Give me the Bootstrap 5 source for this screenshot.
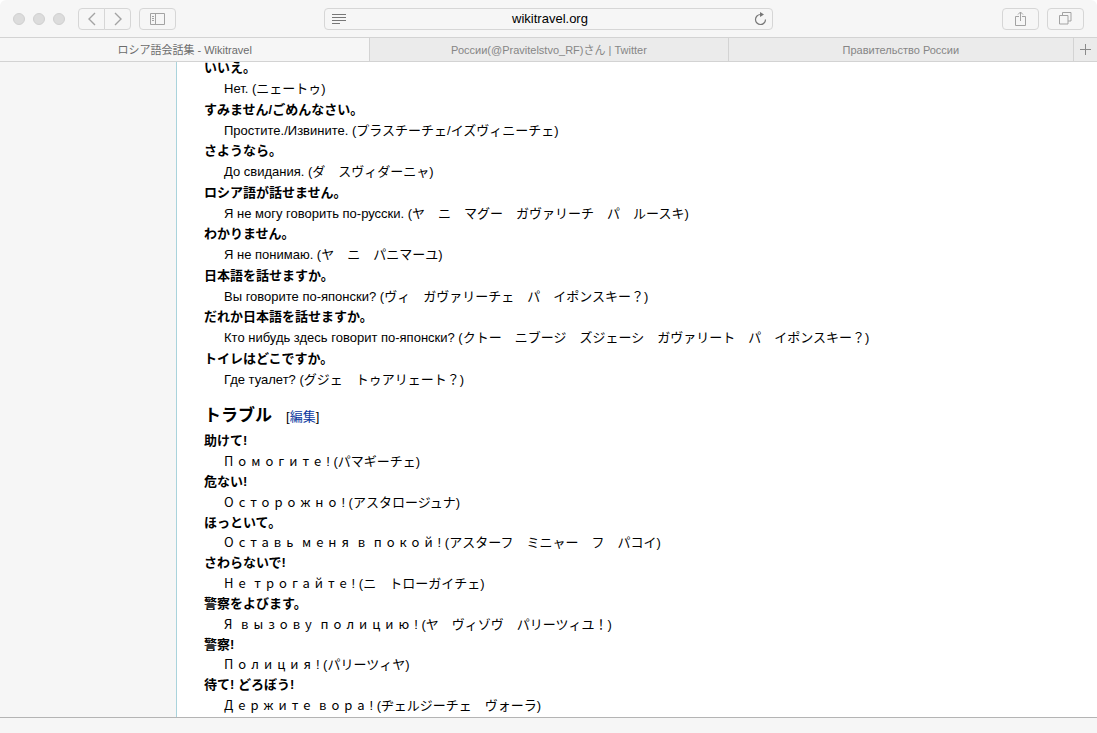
<!DOCTYPE html>
<html lang="ja">
<head>
<meta charset="utf-8">
<meta name="viewport" content="width=device-width, initial-scale=1">
<title>ロシア語会話集 - Wikitravel</title>
<link href="https://cdn.jsdelivr.net/npm/bootstrap@5.3.0/dist/css/bootstrap.min.css" rel="stylesheet">
<style>
body { font-family: "Liberation Sans", "Noto Sans CJK JP", sans-serif; font-size: 13px; line-height: 20px; color: #000; background: #fff; }
.browser { background: #f6f6f6; border-radius: 6px 6px 0 0; overflow: hidden; }
.toolbar { height: 38px; border-bottom: 1px solid #d3d3d3; padding: 0 13px; }
.toolbar-side { flex: 1 1 0; }
.lights { margin-right: 13px; }
.light { width: 12px; height: 12px; border-radius: 50%; background: #dcdcdc; border: 1px solid #d0d0d0; }
.tool { height: 22px; width: 37px; padding: 0; line-height: 1; border: 1px solid #d6d6d6; border-radius: 4px; background: #f6f6f6; color: #a3a3a3; display: flex; align-items: center; justify-content: center; }
.tool-nav { width: 27px; }
.tool-nav + .tool-nav { margin-left: -1px; }
.address { width: 42%; height: 22px; border: 1px solid #d6d6d6; border-radius: 4px; padding: 0 5px 0 7px; color: #777; }
.address input { background: transparent; border: 0; outline: 0; min-width: 0; font-size: 13px; line-height: 20px; color: #000; padding: 0; }
.plain { border: 0; background: none; padding: 0; line-height: 1; color: inherit; display: flex; }
.tabs { height: 24px; border-bottom: 1px solid #d3d3d3; font-size: 11px; line-height: 24px; }
.tab { flex: 345 1 0; background: #ebebeb; color: #868686; text-decoration: none; border-right: 1px solid #d3d3d3; }
.tab-wide { flex-grow: 358; }
.tab-current { flex-grow: 370; background: #f6f6f6; color: #6c6c6c; }
.tab-new { width: 23px; background: #ebebeb; color: #8a8a8a; }
.sidebar { width: 176px; background: #f6f6f6; }
.article { background: #fff; border-left: 1px solid #aad3dc; padding-left: 27px; min-height: 0; overflow: hidden; }
.phrases { margin: 0; }
.phrases dt { line-height: 20px; font-weight: 700; }
.phrases dd { line-height: 20px; margin: 0 0 0 20px; padding-top: 1px; }
.phrases-basic { margin-top: -4px; }
.phrases-basic dd:nth-of-type(odd) { margin-bottom: 1px; }
.phrases-trouble dd:nth-of-type(3n) { padding-top: 0; }
.section-title { font-size: 17px; line-height: 24px; font-weight: 700; margin: 14px 0 2px; }
.edit { font-size: 13px; font-weight: 400; margin-left: 14px; }
.edit a { color: #0b3aa0; text-decoration: none; }
.wide { font-family: "Noto Sans CJK JP", sans-serif; letter-spacing: 5px; line-height: 1; }
.status { height: 16px; border-top: 1px solid #b4b4b4; }
</style>
</head>
<body>
<div class="browser d-flex flex-column vh-100">
  <header class="toolbar d-flex align-items-center flex-shrink-0">
    <div class="toolbar-side d-flex align-items-center">
      <div class="lights d-flex gap-2">
        <span class="light"></span><span class="light"></span><span class="light"></span>
      </div>
      <button class="tool tool-nav rounded-end-0" type="button" aria-label="戻る"><svg width="10" height="14" fill="none" stroke="currentColor" stroke-width="1.4"><path d="M8 1 2 7l6 6"/></svg></button>
      <button class="tool tool-nav rounded-start-0 me-2" type="button" aria-label="進む"><svg width="10" height="14" fill="none" stroke="currentColor" stroke-width="1.4"><path d="m2 1 6 6-6 6"/></svg></button>
      <button class="tool" type="button" aria-label="サイドバー"><svg width="15" height="12" fill="none" stroke="currentColor"><path d="M.5.5h14v11H.5zM5.500.5v11M2 3.500h2M2 5.500h2M2 7.500h2"/></svg></button>
    </div>
    <div class="address d-flex align-items-center">
      <button class="plain" type="button" aria-label="リーダー"><svg width="14" height="10" stroke="currentColor"><path d="M0 .5h14M0 3.500h14M0 6.500h14M0 9.500h8"/></svg></button>
      <input class="flex-fill text-center" type="text" value="wikitravel.org" aria-label="アドレス">
      <button class="plain" type="button" aria-label="再読み込み"><svg width="13" height="14" fill="none" stroke="currentColor" stroke-width="1.200"><path d="M6.500 2.500a5 5 0 1 0 5 5"/><path d="M6 0v5l4-2.500z" fill="currentColor" stroke="none"/></svg></button>
    </div>
    <div class="toolbar-side d-flex justify-content-end gap-2">
      <button class="tool" type="button" aria-label="共有"><svg width="11" height="16" fill="none" stroke="currentColor"><path d="M4 5.500H.5v9h10v-9H7M5.500 10V1M3 3.500 5.500 1 8 3.500"/></svg></button>
      <button class="tool" type="button" aria-label="すべてのタブを表示"><svg width="13" height="13" fill="none" stroke="currentColor"><path d="M.5 3.500h8.500v8.500H.5zM3.500 3.500v-3h8.500v8.500H9"/></svg></button>
    </div>
  </header>
  <nav class="tabs d-flex flex-shrink-0">
    <a class="tab tab-current text-center" href="#">ロシア語会話集 - Wikitravel</a>
    <a class="tab tab-wide text-center" href="#">России(@Pravitelstvo_RF)さん | Twitter</a>
    <a class="tab text-center" href="#">Правительство России</a>
    <button class="plain tab-new align-items-center justify-content-center" type="button" aria-label="新規タブ"><svg width="11" height="11" stroke="currentColor"><path d="M5.500 0v11M0 5.500h11"/></svg></button>
  </nav>
  <div class="d-flex flex-fill overflow-hidden">
    <aside class="sidebar flex-shrink-0"></aside>
    <main class="article flex-fill">
      <dl class="phrases phrases-basic">
        <dt>いいえ。</dt>
        <dd>Нет. (ニェートゥ)</dd>
        <dt>すみません/ごめんなさい。</dt>
        <dd>Простите./Извините. (プラスチーチェ/イズヴィニーチェ)</dd>
        <dt>さようなら。</dt>
        <dd>До свидания. (ダ　スヴィダーニャ)</dd>
        <dt>ロシア語が話せません。</dt>
        <dd>Я не могу говорить по-русски. (ヤ　ニ　マグー　ガヴァリーチ　パ　ルースキ)</dd>
        <dt>わかりません。</dt>
        <dd>Я не понимаю. (ヤ　ニ　パニマーユ)</dd>
        <dt>日本語を話せますか。</dt>
        <dd>Вы говорите по-японски? (ヴィ　ガヴァリーチェ　パ　イポンスキー？)</dd>
        <dt>だれか日本語を話せますか。</dt>
        <dd>Кто нибудь здесь говорит по-японски? (クトー　ニブージ　ズジェーシ　ガヴァリート　パ　イポンスキー？)</dd>
        <dt>トイレはどこですか。</dt>
        <dd>Где туалет? (グジェ　トゥアリェート？)</dd>
      </dl>
      <h3 class="section-title">トラブル<span class="edit">[<a href="#">編集</a>]</span></h3>
      <dl class="phrases phrases-trouble">
        <dt>助けて!</dt>
        <dd><span class="wide">Помогите</span>! (パマギーチェ)</dd>
        <dt>危ない!</dt>
        <dd><span class="wide">Осторожно</span>! (アスタロージュナ)</dd>
        <dt>ほっといて。</dt>
        <dd><span class="wide">Оставь</span> <span class="wide">меня</span> <span class="wide">в</span> <span class="wide">покой</span>! (アスターフ　ミニャー　フ　パコイ)</dd>
        <dt>さわらないで!</dt>
        <dd><span class="wide">Не</span> <span class="wide">трогайте</span>! (ニ　トローガイチェ)</dd>
        <dt>警察をよびます。</dt>
        <dd><span class="wide">Я</span> <span class="wide">вызову</span> <span class="wide">полицию</span>! (ヤ　ヴィゾヴ　パリーツィユ！)</dd>
        <dt>警察!</dt>
        <dd><span class="wide">Полиция</span>! (パリーツィヤ)</dd>
        <dt>待て! どろぼう!</dt>
        <dd><span class="wide">Держите</span> <span class="wide">вора</span>! (ヂェルジーチェ　ヴォーラ)</dd>
      </dl>
    </main>
  </div>
  <footer class="status flex-shrink-0"></footer>
</div>
<script src="https://cdn.jsdelivr.net/npm/bootstrap@5.3.0/dist/js/bootstrap.bundle.min.js"></script>
</body>
</html>
